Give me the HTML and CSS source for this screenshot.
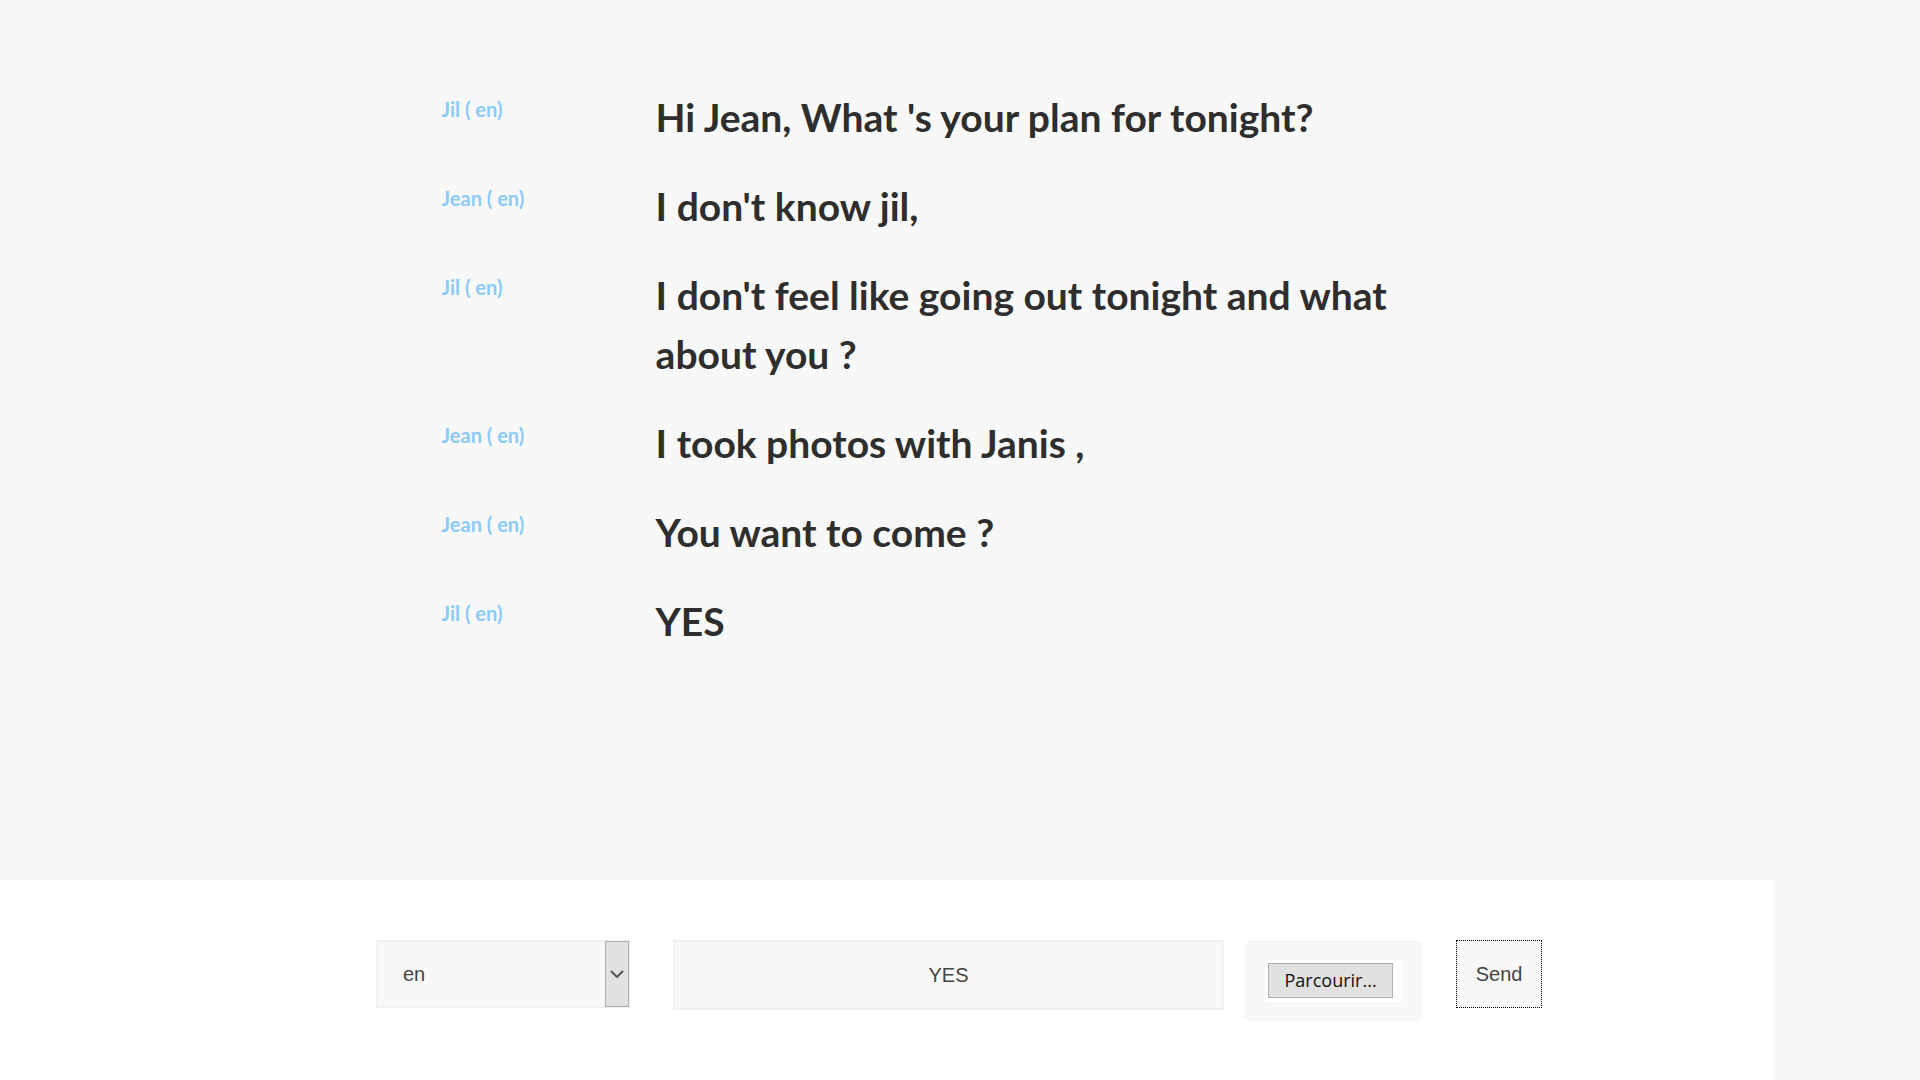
FILE: index.html
```
<!DOCTYPE html>
<html lang="en">
<head>
    <meta charset="UTF-8">
    <meta name="viewport" content="width=device-width, initial-scale=1.0">
    <title>Chat</title>
    <link rel="stylesheet" href="styles.css">
</head>
<body>
    <main class="messages">
        <div class="message">
            <span class="author">Jil ( en)</span>
            <p class="text">Hi Jean, What 's your plan for tonight?</p>
        </div>
        <div class="message">
            <span class="author">Jean ( en)</span>
            <p class="text">I don't know jil,</p>
        </div>
        <div class="message">
            <span class="author">Jil ( en)</span>
            <p class="text">I don't feel like going out tonight and what about you ?</p>
        </div>
        <div class="message">
            <span class="author">Jean ( en)</span>
            <p class="text">I took photos with Janis ,</p>
        </div>
        <div class="message">
            <span class="author">Jean ( en)</span>
            <p class="text">You want to come ?</p>
        </div>
        <div class="message">
            <span class="author">Jil ( en)</span>
            <p class="text">YES</p>
        </div>
    </main>

    <footer class="bar">
        <form class="send-form">
            <div class="language">
                <select name="language" aria-label="Language">
                    <option>en</option>
                    <option>fr</option>
                </select>
                <span class="arrow">
                    <svg width="14" height="8" viewBox="0 0 14 8" fill="none" stroke="#555" stroke-width="2"><path d="M1 1l6 6 6-6"/></svg>
                </span>
            </div>
            <input class="message-input" type="text" name="message" value="YES" aria-label="Message">
            <div class="upload">
                <div class="upload-inner">
                    <input class="file-input" type="file" id="file" name="file">
                    <label class="browse" for="file">Parcourir...</label>
                </div>
            </div>
            <button class="send" type="submit">Send</button>
        </form>
    </footer>
</body>
</html>
```
FILE: styles.css
```
* {
    margin: 0;
    padding: 0;
    box-sizing: border-box;
}

body {
    display: flex;
    flex-direction: column;
    min-height: 100vh;
    background: #f8f8f8;
    color: #2e2e2e;
    font-family: Lato, sans-serif;
}

/* conversation */
.messages {
    flex: 1;
    width: 54%;
    margin: 0 auto;
    padding-top: 88px;
}

.message {
    display: grid;
    grid-template-columns: 214px 1fr;
    margin-bottom: 30px;
    padding-right: 60px;
}

.author {
    color: #8bcbf9;
    font-size: 20px;
    font-weight: bold;
    line-height: 42px;
}

.text {
    font-size: 39px;
    font-weight: bold;
    line-height: 59px;
}

/* bottom bar */
.bar {
    width: 92.4%;
    padding: 60px 232px 59px 376px;
    background: #fff;
}

.send-form {
    display: flex;
    align-items: flex-start;
}

.language,
.message-input,
.send {
    color: #444;
    font-family: "Liberation Sans", Arial, sans-serif;
    font-size: 20px;
}

.language {
    position: relative;
    width: 254px;
    margin-right: 43px;
}

.language select {
    width: 100%;
    height: 68px;
    padding: 0 25px;
    border: 2px solid #f1f1f1;
    background: #f8f8f8;
    color: inherit;
    font: inherit;
    appearance: none;
}

.arrow {
    position: absolute;
    top: 1px;
    right: 1px;
    bottom: 1px;
    display: flex;
    align-items: center;
    justify-content: center;
    width: 24px;
    border: 1px solid #adadad;
    background: #e1e1e1;
    pointer-events: none;
}

.message-input {
    flex: 1;
    min-width: 0;
    height: 70px;
    margin-right: 21px;
    border: 2px solid #f1f1f1;
    background: #f8f8f8;
    text-align: center;
}

.upload {
    width: 178px;
    height: 81px;
    margin-right: 33px;
    padding: 20px;
    border-radius: 6px;
    background: #f8f8f8;
}

.upload-inner {
    position: relative;
    padding: 3px 10px 3px 3px;
    background: #fff;
}

.file-input {
    position: absolute;
    width: 1px;
    height: 1px;
    opacity: 0;
}

.browse {
    display: block;
    border: 1px solid #adadad;
    background: #e1e1e1;
    color: #111;
    font-family: "Open Sans", sans-serif;
    font-size: 18px;
    line-height: 33px;
    text-align: center;
}

.send {
    width: 86px;
    height: 68px;
    border: 1px dotted #000;
    background: #f8f8f8;
}
```
